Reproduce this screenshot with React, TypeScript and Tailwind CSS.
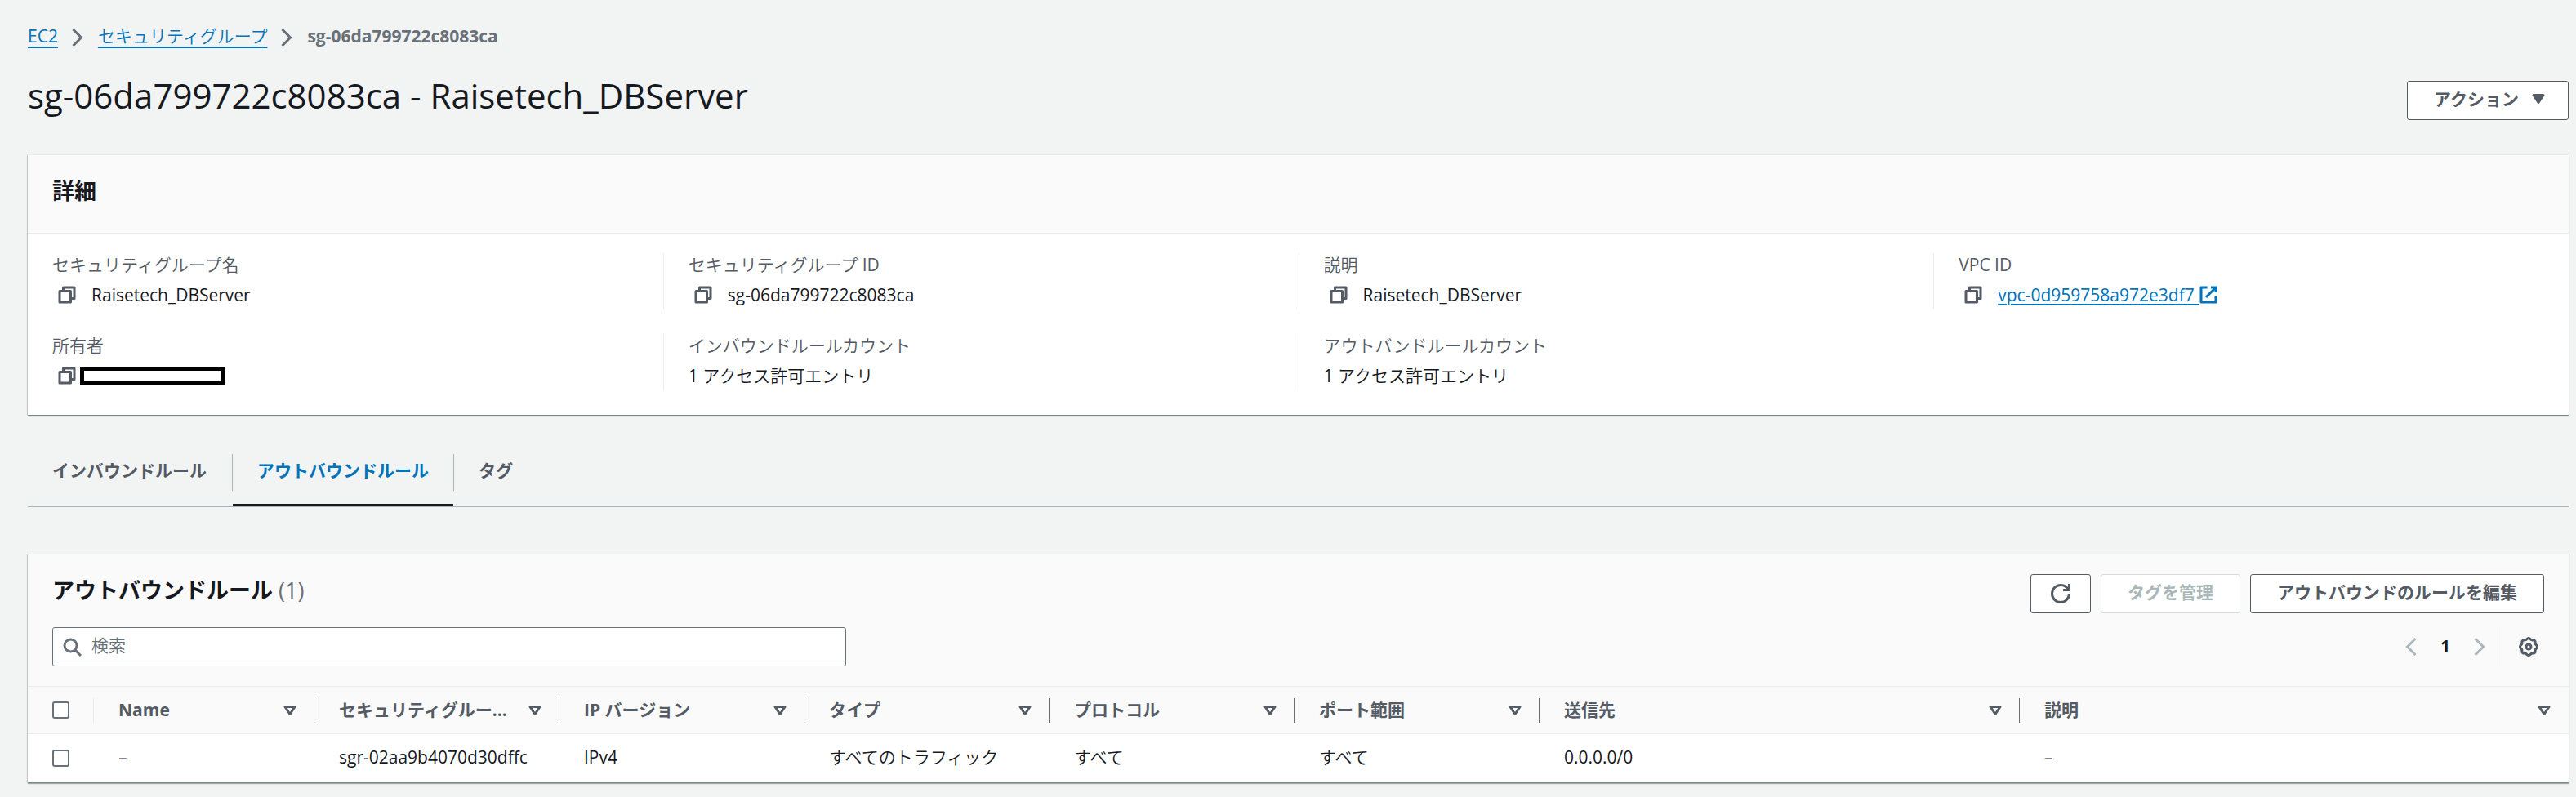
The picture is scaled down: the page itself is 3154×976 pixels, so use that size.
import { Fragment, type ReactNode } from "react";

const icon = "size-6 shrink-0 fill-none stroke-current stroke-2";

function CopyIcon() {
  return (
    <svg viewBox="0 0 16 16" className={icon} strokeLinejoin="round" aria-hidden="true">
      <path d="M2 5h9v9H2z" />
      <path d="M5 5V2h9v9h-3" />
    </svg>
  );
}

function ExternalIcon() {
  return (
    <svg viewBox="0 0 16 16" className={icon} aria-hidden="true">
      <path d="M10 2h4v4" />
      <path d="M6 10l8-8" />
      <path d="M14 9.05V14H2V2h5" strokeLinejoin="round" />
    </svg>
  );
}

function SearchIcon() {
  return (
    <svg viewBox="0 0 16 16" className={icon} aria-hidden="true">
      <circle cx="7" cy="7" r="5" />
      <path d="M15.3 15.3L10.6 10.6" />
    </svg>
  );
}

function RefreshIcon() {
  return (
    <svg viewBox="0 0 16 16" className={icon} aria-hidden="true">
      <path d="M10 5h5V0" />
      <path d="M15 8a6.957 6.957 0 01-7 7 6.957 6.957 0 01-7-7 6.957 6.957 0 017-7 6.87 6.87 0 016.3 4" />
    </svg>
  );
}

const gearOutline =
  Array.from({ length: 96 }, (_, i) => {
    const a = (i / 96) * Math.PI * 2;
    const r = 6.5 + 0.5 * Math.cos(8 * a);
    return `${i ? "L" : "M"}${(8 + r * Math.cos(a)).toFixed(2)} ${(8 + r * Math.sin(a)).toFixed(2)}`;
  }).join("") + "Z";

function GearIcon() {
  return (
    <svg viewBox="0 0 16 16" className={icon} aria-hidden="true">
      <path d={gearOutline} />
      <circle cx="8" cy="8" r="2" />
    </svg>
  );
}

function Chevron({ left = false }: { left?: boolean }) {
  return (
    <svg viewBox="0 0 14 22" className="h-[22px] w-[14px] shrink-0 fill-none stroke-current stroke-3" aria-hidden="true">
      <path d={left ? "M12.5 1L2.5 11l10 10" : "M1.5 1l10 10-10 10"} />
    </svg>
  );
}

function Triangle({ filled = false }: { filled?: boolean }) {
  return (
    <svg viewBox="0 0 16 16" className={icon} strokeLinejoin="round" aria-hidden="true">
      <path d="M4 5h8l-4 6z" fill={filled ? "currentColor" : "none"} />
    </svg>
  );
}

const panel =
  "border-t border-[#eaeded] bg-white shadow-[0_2px_1px_0_rgba(0,28,36,0.3),1px_1px_1px_0_rgba(0,28,36,0.15),-1px_1px_1px_0_rgba(0,28,36,0.15)]";
const bold = "font-['Open_Sans','Noto_Sans_CJK_JP',sans-serif] font-bold";
const button = `flex h-12 items-center justify-center rounded-[3px] border bg-white pb-1 ${bold}`;

function Field({ label, first = false, children }: { label: string; first?: boolean; children: ReactNode }) {
  return (
    <div className={`border-l pr-[30px] pb-[3px] ${first ? "border-transparent pl-[29px]" : "border-[#eaeded] pl-[30px]"}`}>
      <dt className="leading-7 text-[#545b64]">{label}</dt>
      <dd className="mt-2 flex h-[30px] items-center">{children}</dd>
    </div>
  );
}

function CopyButton({ label }: { label: string }) {
  return (
    <button type="button" aria-label={label} className="ml-1.5 text-[#545b64]">
      <CopyIcon />
    </button>
  );
}

const tabs = [
  { label: "インバウンドルール", active: false },
  { label: "アウトバウンドルール", active: true },
  { label: "タグ", active: false },
];

const columns = [
  { label: "Name", width: "w-[270px]", value: "–" },
  { label: "セキュリティグルー...", width: "w-[300px]", value: "sgr-02aa9b4070d30dffc" },
  { label: "IP バージョン", width: "w-[300px]", value: "IPv4" },
  { label: "タイプ", width: "w-[300px]", value: "すべてのトラフィック" },
  { label: "プロトコル", width: "w-[300px]", value: "すべて" },
  { label: "ポート範囲", width: "w-[300px]", value: "すべて" },
  { label: "送信先", width: "w-[588px]", value: "0.0.0.0/0" },
  { label: "説明", width: "", value: "–" },
];

function Checkbox({ label }: { label: string }) {
  return (
    <input
      type="checkbox"
      aria-label={label}
      className="block size-[21px] appearance-none rounded-[3px] border-2 border-[#687078] bg-white checked:bg-[#0073bb]"
    />
  );
}

export default function App() {
  return (
    <div className="min-h-screen bg-[#f2f3f3] pt-[29px] pr-[9px] pb-4 pl-[34px] font-['Open_Sans','Noto_Sans_CJK_JP_DemiLight','Noto_Sans_CJK_JP',sans-serif] text-[21px] leading-[30px] text-[#16191f]">
      <nav aria-label="パンくずリスト" className="flex items-center text-[#687078]">
        <a href="#ec2" className="text-[#0073bb] underline decoration-2 underline-offset-[5px]">EC2</a>
        <span className="mr-[18px] ml-[17px] pt-1"><Chevron /></span>
        <a href="#security-groups" className="text-[#0073bb] underline decoration-2 underline-offset-[5px]">セキュリティグループ</a>
        <span className="mr-[18px] ml-[17px] pt-1"><Chevron /></span>
        <span className="font-bold">sg-06da799722c8083ca</span>
      </nav>

      <header className="mt-[31px] flex items-start justify-between">
        <h1 className="text-[42px] leading-[54px]">sg-06da799722c8083ca - Raisetech_DBServer</h1>
        <button type="button" className={`${button} mt-[9px] gap-3 border-[#545b64] pr-6 pl-8 text-[#545b64]`}>
          アクション
          <Triangle filled />
        </button>
      </header>

      <section className={`${panel} mt-[42px]`}>
        <div className="border-b border-[#eaeded] bg-[#fafafa] px-[30px] pt-[26px] pb-[33px]">
          <h2 className={`${bold} text-[27px] leading-9`}>詳細</h2>
        </div>
        <dl className="grid grid-cols-4 gap-y-[30px] pt-6 pb-[30px]">
          <Field label="セキュリティグループ名" first>
            <CopyButton label="名前をコピー" />
            <span className="ml-[18px]">Raisetech_DBServer</span>
          </Field>
          <Field label="セキュリティグループ ID">
            <CopyButton label="ID をコピー" />
            <span className="ml-[18px]">sg-06da799722c8083ca</span>
          </Field>
          <Field label="説明">
            <CopyButton label="説明をコピー" />
            <span className="ml-[18px]">Raisetech_DBServer</span>
          </Field>
          <Field label="VPC ID">
            <CopyButton label="VPC ID をコピー" />
            <a href="#vpc" className="ml-[18px] flex items-center text-[#0073bb]">
              <span className="whitespace-pre underline decoration-2 underline-offset-[3px]">{"vpc-0d959758a972e3df7 "}</span>
              <ExternalIcon />
            </a>
          </Field>
          <Field label="所有者" first>
            <CopyButton label="所有者をコピー" />
            <span className="ml-1 h-[22px] w-[178px] border-5 border-black bg-white" />
          </Field>
          <Field label="インバウンドルールカウント">1 アクセス許可エントリ</Field>
          <Field label="アウトバンドルールカウント">1 アクセス許可エントリ</Field>
        </dl>
      </section>

      <div role="tablist" className="mt-[37px] flex items-start border-b border-[#aab7b8]">
        {tabs.map((tab, i) => (
          <Fragment key={tab.label}>
            {i > 0 && <span className="mt-[11px] h-[45px] w-px bg-[#aab7b8]" />}
            <button
              type="button"
              role="tab"
              aria-selected={tab.active}
              className={`${bold} border-b-3 px-[30px] pt-4 pb-[26px] ${
                tab.active ? "border-[#16191f] text-[#0073bb]" : "mr-px border-transparent text-[#545b64]"
              }`}
            >
              {tab.label}
            </button>
          </Fragment>
        ))}
      </div>

      <section className={`${panel} mt-[57px]`}>
        <div className="bg-[#fafafa] px-[30px] pt-6 pb-6">
          <div className="flex items-start justify-between">
            <h2 className={`${bold} mt-0.5 text-[27px] leading-9`}>
              アウトバウンドルール <span className="font-normal text-[#687078]">(1)</span>
            </h2>
            <div className="flex gap-3">
              <button type="button" aria-label="更新" className="flex h-12 w-[74px] items-center justify-center rounded-[3px] border border-[#545b64] bg-white text-[#545b64]">
                <RefreshIcon />
              </button>
              <button type="button" disabled className={`${button} border-[#d5dbdb] px-8 text-[#aab7b8]`}>タグを管理</button>
              <button type="button" className={`${button} border-[#545b64] px-8 text-[#545b64]`}>アウトバウンドのルールを編集</button>
            </div>
          </div>
          <div className="mt-[17px] flex items-center justify-between">
            <label className="flex h-12 w-[972px] items-center gap-3 rounded-[3px] border border-[#687078] bg-white px-[11px] text-[#687078]">
              <SearchIcon />
              <input type="search" aria-label="検索" placeholder="検索" className="h-full min-w-0 flex-1 bg-transparent pb-1 outline-none placeholder:text-[#687078]" />
            </label>
            <div className="flex h-12 items-center pr-[7px]">
              <button type="button" aria-label="前のページ" className="text-[#aab7b8]"><Chevron left /></button>
              <span className="w-[70px] pb-[3px] text-center font-bold">1</span>
              <button type="button" aria-label="次のページ" className="text-[#aab7b8]"><Chevron /></button>
              <span className="mx-5 h-12 w-px bg-[#eaeded]" />
              <button type="button" aria-label="設定" className="text-[#545b64]"><GearIcon /></button>
            </div>
          </div>
        </div>
        <table className="w-full table-fixed text-left">
          <thead className="border-y border-[#eaeded] bg-[#fafafa] text-[#545b64]">
            <tr className="h-[58px]">
              <th className="w-[81px] p-0">
                <div className="flex h-[30px] items-center justify-between border-r border-[#eaeded] pl-[30px]">
                  <Checkbox label="すべて選択" />
                </div>
              </th>
              {columns.map((c, i) => (
                <th key={c.label} className={`${c.width} p-0`}>
                  <div className={`${bold} flex h-[30px] items-center justify-between border-r pr-[17px] pl-[30px] whitespace-nowrap ${i < columns.length - 1 ? "border-[#687078]" : "border-transparent"}`}>
                    <span className="pb-0.5">{c.label}</span>
                    <Triangle />
                  </div>
                </th>
              ))}
            </tr>
          </thead>
          <tbody>
            <tr className="h-[59px]">
              <td className="p-0 pl-[30px]"><Checkbox label="sgr-02aa9b4070d30dffc を選択" /></td>
              {columns.map((c) => (
                <td key={c.label} className="p-0 pb-0.5 pl-[30px] whitespace-nowrap">{c.value}</td>
              ))}
            </tr>
          </tbody>
        </table>
      </section>
    </div>
  );
}
